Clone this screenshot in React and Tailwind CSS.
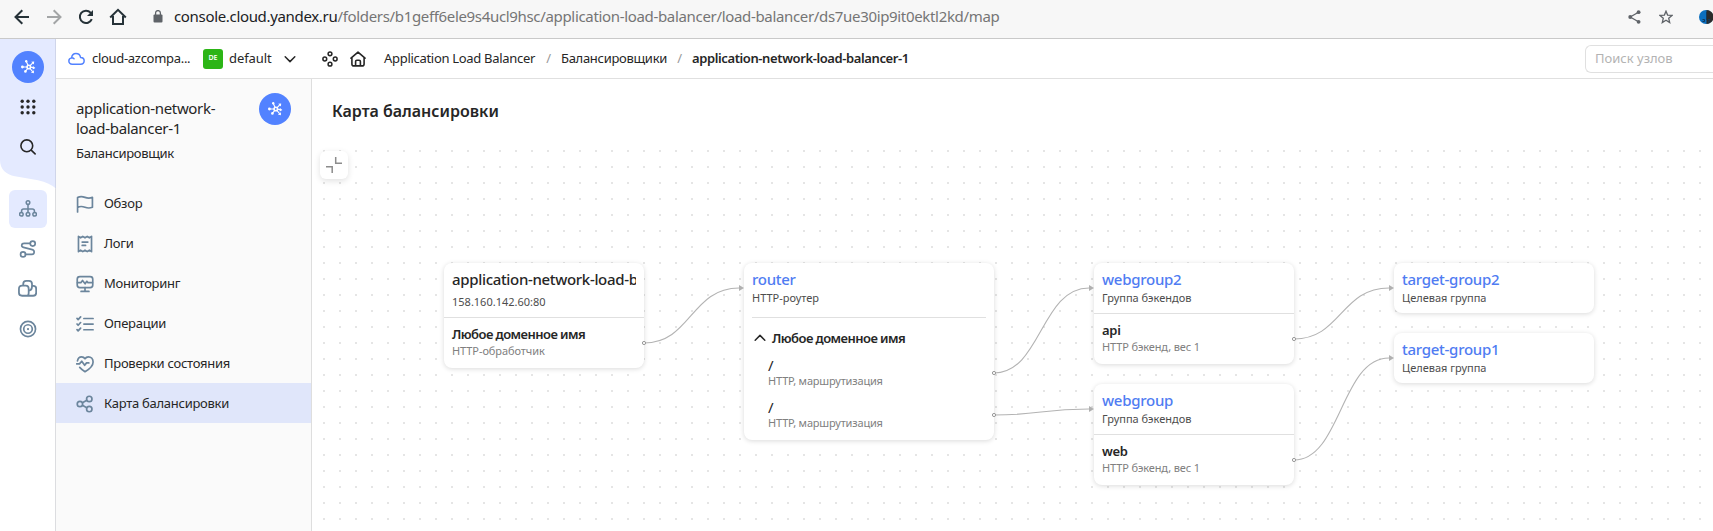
import React from 'react';

function Icon({ size = 18, w = 1.5, className = '', children }) {
  return (
    <svg width={size} height={size} viewBox="0 0 16 16" fill="none" stroke="currentColor" strokeWidth={w} strokeLinecap="round" strokeLinejoin="round" className={`shrink-0 ${className}`}>
      {children}
    </svg>
  );
}

function BalancerLogo() {
  return (
    <div className="flex size-8 shrink-0 items-center justify-center rounded-full bg-[#5282ff] text-white">
      <svg width="16" height="16" viewBox="0 0 16 16" stroke="currentColor" strokeWidth="1.1" fill="currentColor">
        <path d="M8.8 8H3M8.800 8 6.300 2.500M8.800 8 12.800 3.800M8.800 8 13.500 8.600M8.800 8 12.600 12.700M8.800 8 5.600 12.200" fill="none" />
        <circle cx="8.800" cy="8" r="2" />
        <circle cx="8.800" cy="8" r="0.9" fill="#5282ff" stroke="none" />
        <circle cx="2.400" cy="8" r="1.400" stroke="none" />
        <circle cx="6.200" cy="2.300" r="1.200" stroke="none" />
        <circle cx="5.400" cy="12.400" r="1.300" stroke="none" />
        <path d="M11.200 2.700 14.200 2.400 13.900 5.400ZM12.900 7 15.400 8.900 12.700 10.400ZM13.900 11.200 13.900 14.200 10.900 13.600Z" stroke="none" />
      </svg>
    </div>
  );
}

function BrowserBar() {
  return (
    <div className="flex h-[39px] shrink-0 items-center border-b border-[#c9c9c9] bg-[#f7f7f7] pb-[5px]">
      <svg width="16" height="16" viewBox="0 0 16 16" fill="none" stroke="#263238" strokeWidth="2" className="ml-[14px]">
        <path d="M15 8H2M8.3 1.2 1.5 8l6.8 6.8" />
      </svg>
      <svg width="16" height="16" viewBox="0 0 16 16" fill="none" stroke="#a3a5a6" strokeWidth="2" className="ml-[16px]">
        <path d="M1 8h13M7.7 1.2 14.5 8l-6.8 6.8" />
      </svg>
      <svg width="16" height="16" viewBox="0 0 16 16" fill="none" stroke="#263238" strokeWidth="2" className="ml-4">
        <path d="M13.8 10.2A6.2 6.2 0 1 1 12.6 3.6L14 5" />
        <path d="M15 1v6H9z" fill="#263238" stroke="none" />
      </svg>
      <svg width="18" height="18" viewBox="0 0 18 18" fill="none" stroke="#263238" strokeWidth="2" className="ml-[15px]">
        <path d="M1.2 9.5 9 1.8l7.8 7.7M4 8v8h10V8" />
      </svg>
      <svg width="10" height="13" viewBox="0 0 10 13" fill="none" className="ml-[26px]">
        <rect x="0.5" y="4.5" width="9" height="8" rx="1" fill="#5f6368" />
        <path d="M2.6 5V3a2.4 2.4 0 0 1 4.8 0v2" stroke="#5f6368" strokeWidth="1.3" />
      </svg>
      <div className="ml-[11px] w-[1448px] text-[15px] tracking-[-0.33px] whitespace-nowrap text-[#757575]">
        <span className="text-[#202124]">console.cloud.yandex.ru</span>/folders/b1geff6ele9s4ucl9hsc/application-load-balancer/load-balancer/ds7ue30ip9it0ektl2kd/map
      </div>
      <svg width="13" height="14" viewBox="0 0 13 14" className="ml-[6px] shrink-0" fill="#5f6368" stroke="#5f6368">
        <path d="M10.5 2.2 2.2 7l8.3 4.8" fill="none" strokeWidth="1.3" />
        <g stroke="none"><circle cx="10.6" cy="2.2" r="1.9" /><circle cx="2.2" cy="7" r="1.9" /><circle cx="10.6" cy="11.8" r="1.9" /></g>
      </svg>
      <svg width="14" height="14" viewBox="0 0 14 14" className="ml-[18px] shrink-0" fill="none" stroke="#5f6368" strokeWidth="1.3">
        <path d="M7 1.200 8.600 5.100l4.400.3-3.300 2.800 1 4.300L7 10.200l-3.700 2.300 1-4.300L1 5.400l4.400-.3z" />
      </svg>
      <svg width="14" height="14" viewBox="0 0 14 14" className="ml-[26px] shrink-0">
        <circle cx="7" cy="7" r="7" fill="#0b6fbf" />
        <path d="M7.5 0A7 7 0 0 1 7.5 14z" fill="#2b2b2b" />
        <path d="M7.5 2v8M3.5 9.5h2v2h-2M9 9.5h2l-2 2.500h2" fill="none" stroke="#123a5c" />
      </svg>
    </div>
  );
}

function Rail() {
  return (
    <div className="relative w-14 shrink-0 border-r border-[#dcdde0] bg-white">
      <svg width="56" height="150" viewBox="0 0 56 150" className="absolute top-0 left-0">
        <path d="M0 0H56V149.5C52 146 46 143 38 141.2L15 137.2C6 135.8 0 130 0 121Z" fill="#e4eaff" />
        <path d="M55.5 0V149" stroke="#cfd5ea" />
      </svg>
      <div className="relative flex flex-col items-center pt-3 text-[#262626]">
        <BalancerLogo />
        <svg width="16" height="16" viewBox="0 0 16 16" fill="currentColor" className="mt-4">
          {[2.2, 8, 13.8].map((y) => [2.2, 8, 13.8].map((x) => <circle key={`${x}-${y}`} cx={x} cy={y} r="1.7" />))}
        </svg>
        <svg width="16" height="16" viewBox="0 0 16 16" fill="none" stroke="currentColor" strokeWidth="1.6" strokeLinecap="round" className="mt-6">
          <circle cx="6.8" cy="6.8" r="5.9" />
          <path d="m11.2 11.2 3.9 3.7" />
        </svg>
        <div className="mt-[35px] flex size-[38px] items-center justify-center rounded-md bg-[#e4eaff] text-[#6b859c]">
          <Icon w={1.35}>
            <circle cx="8" cy="2.3" r="1.6" />
            <circle cx="2.1" cy="12.7" r="1.6" />
            <circle cx="8" cy="12.7" r="1.6" />
            <circle cx="13.9" cy="12.7" r="1.6" />
            <path d="M8 4v7M2.3 11V9.8c0-1 .7-1.8 1.8-1.8h7.8c1.100 0 1.800.8 1.800 1.800V11" />
          </Icon>
        </div>
        <div className="mt-3 flex flex-col items-center text-[#6b859c]">
          <Icon>
            <circle cx="12.200" cy="3.200" r="2.200" />
            <circle cx="3.600" cy="12.800" r="2.200" />
            <path d="M10 3H4.600C1.900 3 1.700 6 4 6.500l7.800 2c2.300.6 2.300 4.200-.4 4.300H5.800" />
          </Icon>
          <Icon size={19} className="mt-[21px]">
            <path d="M4.400 5.600V4.200c0-1.400 1-2.600 2.600-2.600h2.200c1.600 0 2.600 1 2.600 2.600v1.600M10.200 9.500c1.400-.6 1.600-1.600 1.600-3.700h1.100c1.500 0 2.400 1 2.400 2.400v3.400c0 1.500-1 2.500-2.500 2.500H3.400C1.800 14.100.8 13.200.8 11.600V8.200c0-1.600 1-2.600 2.600-2.600h3.200c1.500 0 2.400 1 2.400 2.600v3.600c0 1.400-.6 2.300-1.600 2.300" />
          </Icon>
          <Icon className="mt-[22px]">
            <circle cx="8" cy="8" r="6.700" />
            <circle cx="8" cy="8" r="3.800" />
            <circle cx="8" cy="8" r="1" fill="currentColor" stroke="none" />
          </Icon>
        </div>
      </div>
    </div>
  );
}

function Header() {
  return (
    <div className="flex h-10 shrink-0 items-center border-b border-[#e0e0e0] text-[13px] tracking-[-0.3px] whitespace-nowrap text-[#262626]">
      <Icon size={17} w={1.400} className="ml-[12px] text-[#5282ff]">
        <path d="M4 13.300c-2 0-3.200-1.400-3.200-3s1.100-2.700 2.600-2.900c.3-2.400 2-4 4.100-4 2.200 0 3.900 1.500 4.300 3.600 2 .1 3.400 1.400 3.400 3.100 0 1.800-1.300 3.200-3.300 3.200zM3.400 7.400c1 0 1.700.2 2.300.8" />
      </Icon>
      <div className="ml-[7px] w-[99px]">cloud-azcompa...</div>
      <div className="ml-3 flex size-5 items-center justify-center rounded-[3px] bg-[#2cb516] text-[7px] font-semibold tracking-normal text-white">DE</div>
      <div className="ml-[6px] w-[42px] tracking-[-0.1px]">default</div>
      <Icon size={14} w={1.700} className="ml-[12px]"><path d="m2.500 5.500 5.500 5.500 5.500-5.500" /></Icon>
      <Icon size={16} w={1.500} className="ml-[25px]">
        <circle cx="8" cy="2.800" r="1.900" />
        <circle cx="8" cy="13.200" r="1.900" />
        <circle cx="2.800" cy="8" r="1.900" />
        <circle cx="13.200" cy="8" r="1.900" />
      </Icon>
      <Icon size={16} w={1.600} className="ml-3">
        <path d="M1 7.200 8 1.100l7 6.100M1.900 6.600v6.300c0 1.300.7 2 2 2h8.200c1.300 0 2-.7 2-2V6.600M5.600 14.700v-4.100c0-.8.5-1.300 1.300-1.300h2.200c.8 0 1.300.5 1.300 1.300v4.100" />
      </Icon>
      <div className="ml-[18px] w-[152px]">Application Load Balancer</div>
      <div className="w-[25px] text-center text-[#999]">/</div>
      <div className="w-[106px]">Балансировщики</div>
      <div className="w-[25px] text-center text-[#999]">/</div>
      <div className="w-[893px] font-semibold tracking-[-0.39px]">application-network-load-balancer-1</div>
      <div className="flex h-7 flex-1 items-center rounded-l-[6px] border border-r-0 border-[#e0e0e0] pl-[9px] tracking-normal text-[#b3b3b3]">Поиск узлов</div>
    </div>
  );
}

const MENU = [
  ['Обзор', <Icon><path d="M1.400 15V2.300c2-1.200 4-1.200 6.600-.2 2.400.9 4.300.9 6.600 0v8.800c-2.300.9-4.200.9-6.600 0-2.600-1-4.600-1-6.600.2" /></Icon>],
  ['Логи', <Icon><path d="M2.200 1.200 4.100 2.500 6 1.200l2 1.300 2-1.300 1.900 1.300 1.900-1.300v13.600l-1.900-1.300-1.900 1.300-2-1.300-2 1.300-1.900-1.300-1.900 1.300zM5.500 6.300h5M5.500 9.300h3" /></Icon>],
  ['Мониторинг', <Icon><rect x="1.100" y="1.500" width="13.800" height="9.700" rx="2.300" /><path d="M1.300 6.800h3l1.500-2 2.300 3 1.500-2.200 1 1.200h4M8 11.300v3M4.500 14.600h7" /></Icon>],
  ['Операции', <Icon><path d="M7 3.100h8.200M7 8.100h8.200M7 13.100h8.200M.9 3l1 1.100 2.200-2.400M.9 8l1 1.100 2.200-2.400M.9 13l1 1.100 2.200-2.400" /></Icon>],
  ['Проверки состояния', <Icon><path d="M1.300 5.200C1.700 2.800 3.300 1.600 5 1.600c1.300 0 2.300.6 3 1.700.7-1.100 1.700-1.700 3-1.700 2.200 0 4.200 1.800 4.200 4.600 0 3.400-4 6.800-7.200 8.600-1.700-1-3.400-2.300-4.700-3.800M.5 7.900h2.600l2-2.400 2.600 3.700 1.700-2.200h2" /></Icon>],
  ['Карта балансировки', <Icon><circle cx="3.500" cy="8" r="2.400" /><circle cx="11.800" cy="3.500" r="2.400" /><circle cx="11.800" cy="12.500" r="2.400" /><path d="m5.700 6.800 3.900-2.100M5.700 9.200l3.900 2.100" /></Icon>],
];

function Sidebar() {
  return (
    <div className="flex w-64 shrink-0 flex-col border-r border-[#dedede] bg-[#fafafa] text-[#262626]">
      <div className="flex h-[104px] shrink-0 justify-between pt-[14px] pr-5 pl-5">
        <div className="pt-[5px] whitespace-nowrap">
          <div className="text-[15px] leading-5 tracking-[-0.33px]">application-network-<br />load-balancer-1</div>
          <div className="mt-[6px] text-[13px] leading-[18px] tracking-[-0.33px]">Балансировщик</div>
        </div>
        <BalancerLogo />
      </div>
      {MENU.map(([label, icon], i) => (
        <div key={label} className={`flex h-10 shrink-0 items-center gap-[10px] pt-px pl-5 text-[13px] tracking-[-0.27px] whitespace-nowrap ${i === 5 ? 'bg-[#e0e6fa]' : ''}`}>
          <span className="text-[#6b859c]">{icon}</span>
          <span>{label}</span>
        </div>
      ))}
    </div>
  );
}

const NODE = 'absolute rounded-lg bg-white shadow-[0_1px_5px_rgba(0,0,0,0.15)] whitespace-nowrap';

function NodeHead({ title, sub }) {
  return (
    <div className="h-[50px] px-2 pt-[6px]">
      <div className="text-[15px] leading-5 font-medium tracking-[-0.27px] text-[#4f7cf2]">{title}</div>
      <div className="mt-px text-[11px] leading-4 text-[#4d4d4d]">{sub}</div>
    </div>
  );
}

function GroupNode({ title, backend, className }) {
  return (
    <div className={`${NODE} h-[101px] w-[200px] ${className}`}>
      <NodeHead title={title} sub="Группа бэкендов" />
      <div className="border-t border-[#e0e0e0] px-2 pt-[7px]">
        <div className="text-[13px] leading-[18px] font-semibold tracking-[-0.3px] text-[#262626]">{backend}</div>
        <div className="text-[11px] leading-4 tracking-[-0.12px] text-[#808080]">HTTP бэкенд, вес 1</div>
      </div>
    </div>
  );
}

const EDGES = [
  [332, 200, 432, 145],
  [682, 230, 782, 145],
  [682, 272, 782, 266],
  [982, 196, 1082, 145],
  [982, 317, 1082, 215],
];

function Canvas() {
  return (
    <div className="relative flex-1 overflow-hidden">
      <svg width="1401" height="388" className="absolute inset-0">
        <defs>
          <pattern id="dots" x="11" y="7" width="16" height="16" patternUnits="userSpaceOnUse">
            <rect width="2" height="2" fill="#e5e5e5" />
          </pattern>
        </defs>
        <rect x="8" y="7" width="1393" height="381" fill="url(#dots)" />
      </svg>
      <div className="absolute top-2 left-2 flex size-7 items-center justify-center rounded-md bg-white shadow-[0_2px_6px_rgba(0,0,0,0.12)]">
        <svg width="16" height="16" viewBox="0 0 16 16" fill="none" stroke="#8c8c8c" strokeWidth="1.500">
          <path d="M9.700 0v6.200H16M0 9.800h6.200V16" />
        </svg>
      </div>

      <div className={`${NODE} top-[120px] left-[132px] h-[105px] w-[200px]`}>
        <div className="h-[54px] px-2 pt-[6px]">
          <div className="overflow-hidden text-[15px] leading-5 font-medium tracking-[-0.33px] text-[#262626]">application-network-load-balancer-1</div>
          <div className="mt-[5px] text-[11px] leading-4 text-[#4d4d4d]">158.160.142.60:80</div>
        </div>
        <div className="border-t border-[#e0e0e0] px-2 pt-[7px]">
          <div className="text-[13px] leading-[18px] font-semibold tracking-[-0.55px] text-[#262626]">Любое доменное имя</div>
          <div className="text-[11px] leading-4 tracking-[-0.08px] text-[#808080]">HTTP-обработчик</div>
        </div>
      </div>

      <div className={`${NODE} top-[120px] left-[432px] h-[177px] w-[250px]`}>
        <NodeHead title="router" sub="HTTP-роутер" />
        <div className="mx-2 mt-1 border-t border-[#e0e0e0] pt-[11px]">
          <div className="flex items-center gap-[5px] pl-[1px] text-[13px] leading-[18px] font-semibold tracking-[-0.55px] text-[#262626]">
            <Icon size={14} w={1.700}><path d="m2.500 10.500 5.500-5.500 5.500 5.500" /></Icon>
            Любое доменное имя
          </div>
          {[0, 1].map((i) => (
            <div key={i} className="h-[42px] pt-[9px] pl-4">
              <div className="text-[15px] leading-[18px] text-[#262626]">/</div>
              <div className="text-[11px] leading-[14px] tracking-[-0.17px] text-[#808080]">HTTP, маршрутизация</div>
            </div>
          ))}
        </div>
      </div>

      <GroupNode title="webgroup2" backend="api" className="top-[120px] left-[782px]" />
      <GroupNode title="webgroup" backend="web" className="top-[241px] left-[782px]" />
      <div className={`${NODE} top-[120px] left-[1082px] w-[200px]`}>
        <NodeHead title="target-group2" sub="Целевая группа" />
      </div>
      <div className={`${NODE} top-[190px] left-[1082px] w-[200px]`}>
        <NodeHead title="target-group1" sub="Целевая группа" />
      </div>

      <svg width="1401" height="388" className="absolute inset-0" fill="none" stroke="#b3b3b3">
        {EDGES.map(([a, b, c, d]) => (
          <g key={`${a}-${b}`}>
            <path d={`M${a} ${b}C${a + 47} ${b} ${c - 53} ${d} ${c - 5} ${d}`} strokeWidth="1.100" />
            <circle cx={a} cy={b} r="1.600" fill="#fff" stroke="#999" />
            <path d={`M${c - 5} ${d - 3}v6l5-3z`} fill="#b0b0b0" stroke="none" />
          </g>
        ))}
      </svg>
    </div>
  );
}

export default function App() {
  return (
    <div className="flex h-[531px] w-[1713px] flex-col overflow-hidden bg-white font-['Noto_Sans','Open_Sans',sans-serif]">
      <BrowserBar />
      <div className="flex min-h-0 flex-1">
        <Rail />
        <div className="flex min-w-0 flex-1 flex-col">
          <Header />
          <div className="flex min-h-0 flex-1">
            <Sidebar />
            <div className="flex min-w-0 flex-1 flex-col">
              <div className="h-16 shrink-0 pt-5 pl-5 text-[16px] leading-6 font-semibold text-[#262626]">Карта балансировки</div>
              <Canvas />
            </div>
          </div>
        </div>
      </div>
    </div>
  );
}
